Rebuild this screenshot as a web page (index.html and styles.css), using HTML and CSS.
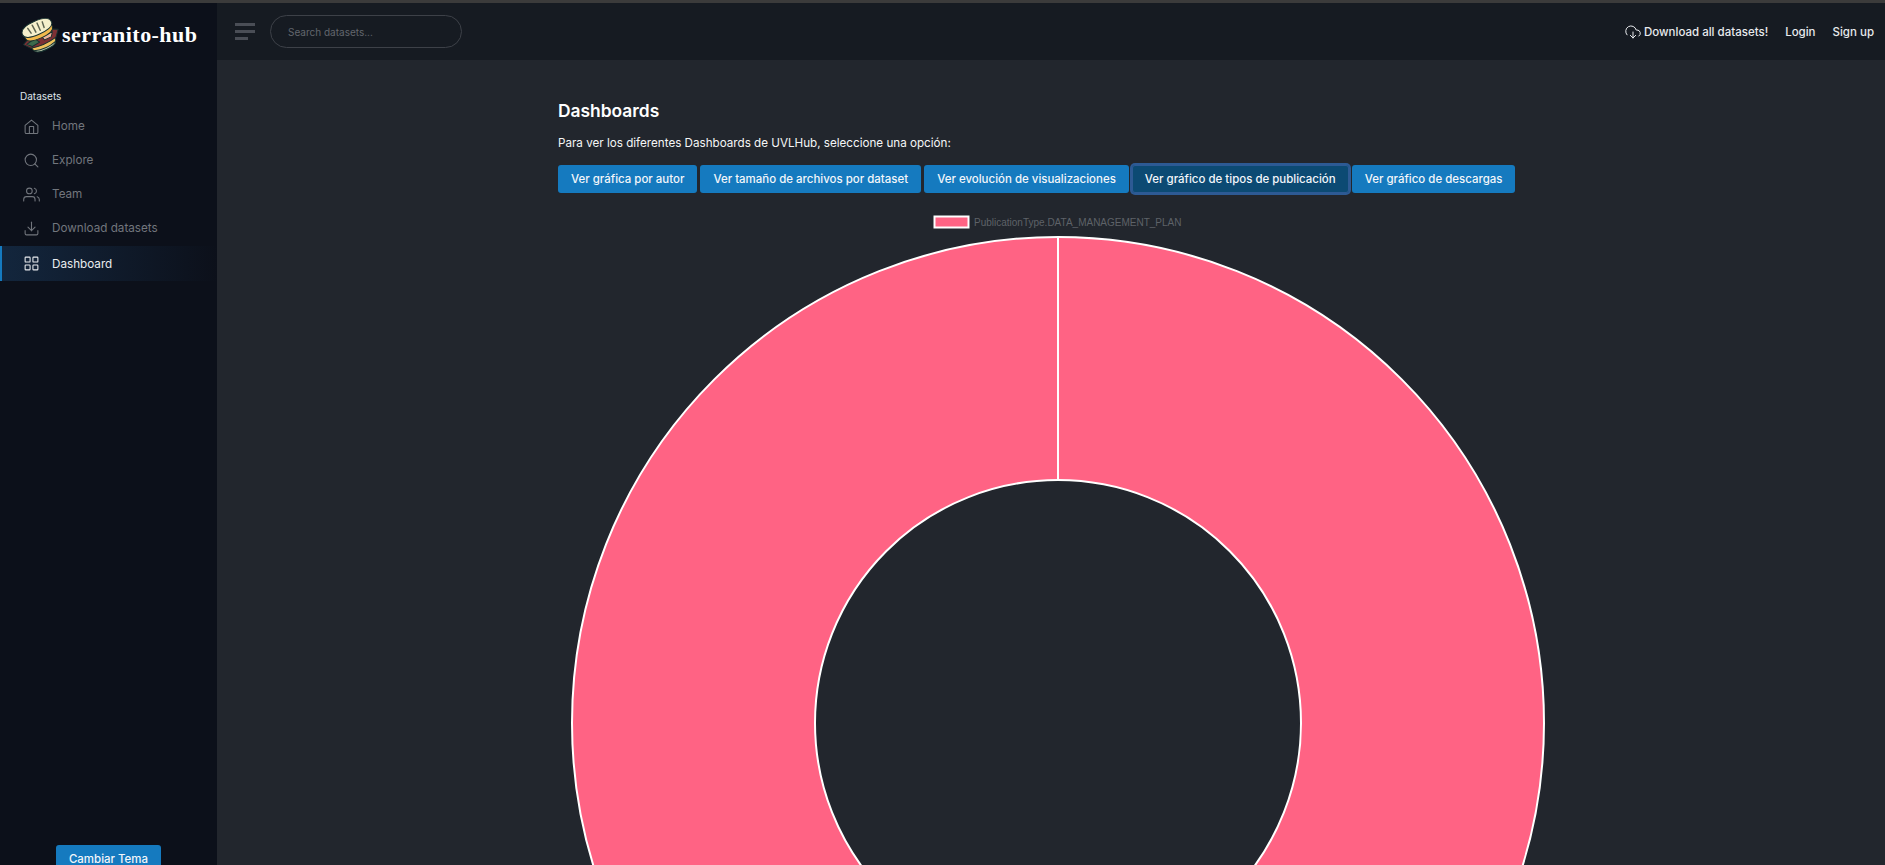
FILE: index.html
```html
<!DOCTYPE html>
<html>
  <head>
    <meta charset="utf-8" />
    <title>Dashboards - serranito-hub</title>
    <link rel="stylesheet" href="styles.css">
  </head>

  <body>
    <div class="wrapper">
      <!-- Sidebar -->
      <nav class="sidebar">
        <a class="brand" href="#">
          <svg class="brand-logo" viewBox="0 0 36 36">
            <g transform="rotate(-24 18 18)" stroke="#16302f" stroke-width="0.9" stroke-linejoin="round">
              <!-- bottom bun -->
              <path d="M6 25 L30 25 Q31 33 18 33 Q5 33 6 25 Z" fill="#eec05a" />
              <path d="M7 29.5 Q18 33 29 29.5 Q28 33 18 33 Q8 33 7 29.5 Z" fill="#b9c4a8" />
              <!-- filling -->
              <path d="M0 20 L4 18 L32 18 L36 20 L31 26 Q18 29 5 26 Z" fill="#7d3034" />
              <path d="M3 21 L12 19 L15 24 L7 25 Z" fill="#3c6a4c" />
              <path d="M19 20 L30 20 L27 24 L20 24 Z" fill="#eeb39a" />
              <!-- top bun -->
              <path d="M4 15 Q4 21 18 21 Q32 21 32 15 L32 13 L4 13 Z" fill="#f2b94c" />
              <path d="M3 11 Q3 4 18 4 Q33 4 33 11 Q33 17 18 17 Q3 17 3 11 Z" fill="#f5efcb" />
              <path d="M10 7.5 L11 13 M15 6.5 L15.5 14 M20 6.5 L20 14 M25 7.5 L24.5 13" stroke="#5d6350" stroke-width="1.4" stroke-linecap="round" fill="none" />
            </g>
          </svg>
          <span class="brand-name">serranito-hub</span>
        </a>

        <div class="sidebar-header">Datasets</div>
        <ul class="sidebar-nav">
          <li class="sidebar-item">
            <a class="sidebar-link" href="#">
              <svg class="icon" viewBox="0 0 24 24"><path d="M3 10.5 12 3l9 7.5V20a2 2 0 0 1-2 2H5a2 2 0 0 1-2-2z" /><path d="M9 22V12h6v10" /></svg>
              <span>Home</span>
            </a>
          </li>
          <li class="sidebar-item">
            <a class="sidebar-link" href="#">
              <svg class="icon" viewBox="0 0 24 24"><circle cx="11" cy="11" r="8" /><path d="m21 21-4.35-4.35" /></svg>
              <span>Explore</span>
            </a>
          </li>
          <li class="sidebar-item">
            <a class="sidebar-link" href="#">
              <svg class="icon" viewBox="0 0 24 24"><path d="M17 21v-2a4 4 0 0 0-4-4H5a4 4 0 0 0-4 4v2" /><circle cx="9" cy="7" r="4" /><path d="M23 21v-2a4 4 0 0 0-3-3.87" /><path d="M16 3.13a4 4 0 0 1 0 7.75" /></svg>
              <span>Team</span>
            </a>
          </li>
          <li class="sidebar-item">
            <a class="sidebar-link" href="#">
              <svg class="icon" viewBox="0 0 24 24"><path d="M21 15v4a2 2 0 0 1-2 2H5a2 2 0 0 1-2-2v-4" /><path d="m7 10 5 5 5-5" /><path d="M12 15V3" /></svg>
              <span>Download datasets</span>
            </a>
          </li>
          <li class="sidebar-item active">
            <a class="sidebar-link" href="#">
              <svg class="icon" viewBox="0 0 24 24"><rect x="3" y="3" width="7" height="7" rx="1" /><rect x="14" y="3" width="7" height="7" rx="1" /><rect x="14" y="14" width="7" height="7" rx="1" /><rect x="3" y="14" width="7" height="7" rx="1" /></svg>
              <span>Dashboard</span>
            </a>
          </li>
        </ul>

        <button class="btn theme-btn">Cambiar Tema</button>
      </nav>

      <div class="main">
        <!-- Top bar -->
        <header class="topbar">
          <div class="hamburger"><i></i><i></i><i></i></div>
          <input class="search" type="text" placeholder="Search datasets..." />
          <div class="topbar-links">
            <a class="download-all" href="#">
              <svg class="icon" viewBox="0 0 24 24"><path d="M8 17l4 4 4-4" /><path d="M12 12v9" /><path d="M20.88 18.09A5 5 0 0 0 18 9h-1.26A8 8 0 1 0 3 16.29" /></svg>
              Download all datasets!
            </a>
            <a href="#">Login</a>
            <a href="#">Sign up</a>
          </div>
        </header>

        <main class="content">
          <h1 class="title">Dashboards</h1>
          <p class="intro">Para ver los diferentes Dashboards de UVLHub, seleccione una opción:</p>
          <div class="btn-row">
            <button class="btn">Ver gráfica por autor</button>
            <button class="btn">Ver tamaño de archivos por dataset</button>
            <button class="btn">Ver evolución de visualizaciones</button>
            <button class="btn focused">Ver gráfico de tipos de publicación</button>
            <button class="btn">Ver gráfico de descargas</button>
          </div>

          <!-- Doughnut chart, one slice -->
          <svg class="chart" viewBox="0 0 1000 1000">
            <rect x="376.5" y="8.5" width="34" height="11" fill="#ff6384" stroke="#fff" stroke-width="2" />
            <text class="legend" x="416" y="18">PublicationType.DATA_MANAGEMENT_PLAN</text>
            <circle cx="500" cy="515" r="364.5" fill="none" stroke="#ff6384" stroke-width="243" />
            <circle cx="500" cy="515" r="486" fill="none" stroke="#fff" stroke-width="2" />
            <circle cx="500" cy="515" r="243" fill="none" stroke="#fff" stroke-width="2" />
            <path d="M500 29V272" stroke="#fff" stroke-width="2" />
          </svg>
        </main>
      </div>
    </div>
  </body>
</html>
```

FILE: styles.css
```css
* {
  box-sizing: border-box;
}
html,
body {
  height: 100%;
  margin: 0;
  overflow: hidden;
}
body {
  background-color: #22262d;
  font-family: "Inter", "Liberation Sans", sans-serif;
  font-size: 11.7px;
  color: #fff;
}
a {
  color: inherit;
  text-decoration: none;
}

.wrapper {
  display: flex;
  height: 100%;
  border-top: 3px solid #3b3b3b;
}

/* Sidebar */
.sidebar {
  display: flex;
  flex-direction: column;
  flex: 0 0 217px;
  background-color: #0c101a;
  overflow: hidden;
}
.brand {
  display: flex;
  align-items: center;
  gap: 3px;
  height: 51px;
  padding: 13px 0 0 21px;
}
.brand-logo {
  flex: none;
  width: 38px;
  height: 38px;
}
.brand-name {
  font-family: "Liberation Serif", serif;
  font-size: 22px;
  font-weight: 700;
  letter-spacing: 0.45px;
  white-space: nowrap;
}
.sidebar-header {
  margin-top: 35px;
  padding-left: 20px;
  font-size: 10px;
  line-height: 14px;
  color: #dfe3e8;
}
.sidebar-nav {
  flex: 1;
  list-style: none;
  margin: 6px 0 0;
  padding: 0;
}
.sidebar-link {
  display: flex;
  align-items: center;
  gap: 12px;
  height: 34px;
  padding-left: 23px;
  color: #72767d;
}
.sidebar-item.active {
  margin-top: 1px;
  background: linear-gradient(90deg, #13263d 0%, #0c101a 100%);
  border-left: 2px solid #157abf;
}
.sidebar-item.active .sidebar-link {
  height: 35px;
  padding-left: 21px;
  color: #e9ecef;
}
.icon {
  flex: none;
  width: 17px;
  height: 17px;
  fill: none;
  stroke: currentColor;
  stroke-width: 1.5;
  stroke-linecap: round;
  stroke-linejoin: round;
}
.theme-btn {
  align-self: center;
  flex: none;
  margin-bottom: -8px;
}

/* Top bar */
.main {
  flex: 1;
  min-width: 0;
}
.topbar {
  display: flex;
  align-items: center;
  height: 57px;
  padding: 0 11px 0 18px;
  background-color: #161b22;
}
.hamburger {
  display: flex;
  flex-direction: column;
  gap: 4px;
  width: 20px;
  margin-right: 15px;
}
.hamburger i {
  height: 3px;
  background-color: #4a4e56;
}
.hamburger i:last-child {
  width: 13px;
}
.search {
  width: 192px;
  height: 33px;
  padding: 0 17px;
  background-color: transparent;
  border: 1px solid #3d4148;
  border-radius: 17px;
  font-family: inherit;
  font-size: 10px;
  outline: none;
}
.search::placeholder {
  color: #62666d;
}
.topbar-links {
  display: flex;
  align-items: center;
  gap: 17px;
  margin-left: auto;
  font-size: 11.5px;
  font-weight: 500;
  color: #e8eaed;
}
.download-all {
  display: flex;
  align-items: center;
  gap: 3px;
}
.download-all .icon {
  width: 16px;
  height: 16px;
}

/* Content */
.content {
  width: 1000px;
  margin-left: 341px;
  padding-top: 40px;
}
.title {
  margin: 0;
  font-size: 17.4px;
  font-weight: 600;
  line-height: 22px;
}
.intro {
  margin: 11px 0 0;
  font-size: 11.65px;
  line-height: 20px;
  color: #f4f5f6;
}
.btn-row {
  display: flex;
  gap: 3px;
  margin-top: 12px;
}
.btn {
  height: 28px;
  padding: 0 13px;
  background-color: #157abf;
  border: 0;
  border-radius: 3px;
  font-family: inherit;
  font-size: 11.47px;
  font-weight: 500;
  color: #f2f6fa;
  white-space: nowrap;
}
.btn.focused {
  background-color: #0c4a73;
  box-shadow: 0 0 0 2px #2d5a94, inset 0 0 0 1px #2d5a94;
}
.chart {
  display: block;
  width: 1000px;
  height: 1000px;
  margin-top: 15px;
}
.legend {
  font-family: "Liberation Sans", sans-serif;
  font-size: 10px;
  fill: #5e6268;
}
```
